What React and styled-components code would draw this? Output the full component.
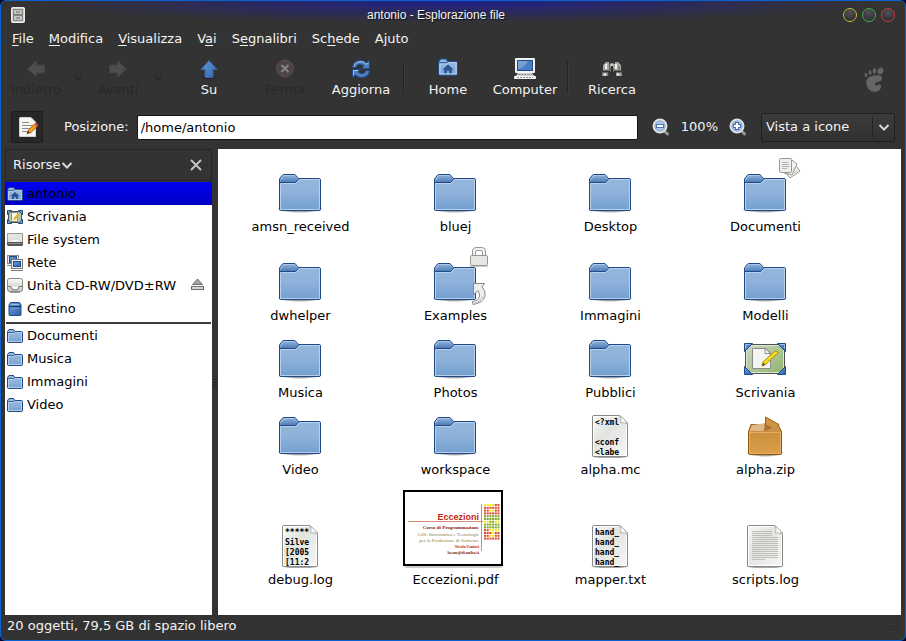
import React, {useState} from 'react'
import styled, {createGlobalStyle} from 'styled-components'

const menus = [
    {before:"", key:"F", after:"ile"},
    {before:"", key:"M", after:"odifica"},
    {before:"", key:"V", after:"isualizza"},
    {before:"V", key:"a", after:"i"},
    {before:"S", key:"e", after:"gnalibri"},
    {before:"Sc", key:"h", after:"ede"},
    {before:"A", key:"j", after:"uto"},
]

const places = [
    {title:"antonio", icon:"home"},
    {title:"Scrivania", icon:"desk"},
    {title:"File system", icon:"drive"},
    {title:"Rete", icon:"network"},
    {title:"Unità CD-RW/DVD±RW", icon:"cd", eject:true},
    {title:"Cestino", icon:"trash"},
]

const bookmarks = [
    {title:"Documenti", icon:"folder"},
    {title:"Musica", icon:"folder"},
    {title:"Immagini", icon:"folder"},
    {title:"Video", icon:"folder"},
]

const files = [
    {title:"amsn_received"},
    {title:"bluej"},
    {title:"Desktop"},
    {title:"Documenti", emblem:"docs"},
    {title:"dwhelper"},
    {title:"Examples", emblem:"lock"},
    {title:"Immagini"},
    {title:"Modelli"},
    {title:"Musica"},
    {title:"Photos"},
    {title:"Pubblici"},
    {title:"Scrivania", type:"desk"},
    {title:"Video"},
    {title:"workspace"},
    {title:"alpha.mc", type:"text", lines:["<?xml", "", "<conf", "<labe"]},
    {title:"alpha.zip", type:"zip"},
    {title:"debug.log", type:"text", lines:["*****", "Silve", "[2005", "[11:2"]},
    {title:"Eccezioni.pdf", type:"pdf"},
    {title:"mapper.txt", type:"text", lines:["hand_", "hand_", "hand_", "hand_"]},
    {title:"scripts.log", type:"log"},
]

// rows of the little dot matrix on the pdf cover
const dots = [
    "yyyyrr", "rrrrrr", "rryyrr", "rrrrrr", "gggggg", "gggggg",
    "yyggyy", "gggggg", "gggggg", "rryyyy", "rrryrr", "rryyrr", "rrrrrr",
]
const dotColors = {y:"#f5ee1c", r:"#dc4a2c", g:"#80a62a"}

function Gradients() {
    return (
        <Hidden width="0" height="0" aria-hidden="true">
            <defs>
                <linearGradient id="folder" x1="0" y1="0" x2="0" y2="1">
                    <stop offset="0" stopColor="#96b8de"/>
                    <stop offset="0.5" stopColor="#8fb2da"/>
                    <stop offset="1" stopColor="#729fcf"/>
                </linearGradient>
                <linearGradient id="tab" x1="0" y1="0" x2="0" y2="1">
                    <stop offset="0" stopColor="#8db0da"/>
                    <stop offset="1" stopColor="#4a7ab4"/>
                </linearGradient>
                <linearGradient id="paper" x1="0" y1="0" x2="1" y2="1">
                    <stop offset="0" stopColor="#fbfbfa"/>
                    <stop offset="0.4" stopColor="#e2e4e0"/>
                    <stop offset="1" stopColor="#f6f7f5"/>
                </linearGradient>
                <linearGradient id="box" x1="0" y1="0" x2="0" y2="1">
                    <stop offset="0" stopColor="#c68a36"/>
                    <stop offset="1" stopColor="#dca04c"/>
                </linearGradient>
                <linearGradient id="board" x1="0" y1="0" x2="1" y2="1">
                    <stop offset="0" stopColor="#d0d8c8"/>
                    <stop offset="1" stopColor="#8db46a"/>
                </linearGradient>
                <linearGradient id="blue" x1="0" y1="0" x2="1" y2="1">
                    <stop offset="0" stopColor="#6b9ad4"/>
                    <stop offset="1" stopColor="#2f65ad"/>
                </linearGradient>
                <linearGradient id="metal" x1="0" y1="0" x2="0" y2="1">
                    <stop offset="0" stopColor="#fafafa"/>
                    <stop offset="1" stopColor="#c4c6c2"/>
                </linearGradient>
                <radialGradient id="shade">
                    <stop offset="0.7" stopColor="#000" stopOpacity="0.35"/>
                    <stop offset="1" stopColor="#000" stopOpacity="0"/>
                </radialGradient>
            </defs>
        </Hidden>
    )
}

function FolderIcon() {
    return (
        <svg width="48" height="48" viewBox="0 0 48 48">
            <ellipse cx="24" cy="42" rx="23" ry="4" fill="url(#shade)"/>
            <path d="M4.500 43.500 Q3.500 43.500 3.500 42 V12 L6.500 8 Q7 7.500 8 7.500 H19 L22.500 11.500 H43 Q44.500 11.500 44.500 13 V42 Q44.500 43.500 43 43.500 Z" fill="url(#folder)" stroke="#204a87"/>
            <path d="M4.500 42.500 V16.500 H20 L24 12.500 H43.500 V42.500 Z" fill="none" stroke="#b8d0ec"/>
            <path d="M4.500 15.500 V12 L7 8.500 H18.500 L22 12 L19.500 15.500 Z" fill="url(#tab)"/>
            <path d="M5 12.500 L7.500 8.500 H18.500" fill="none" stroke="#aac6e6"/>
            <path d="M3.500 15.500 H19.500 L23 11.500" fill="none" stroke="#204a87"/>
        </svg>
    )
}

function DeskIcon() {
    return (
        <svg width="48" height="48" viewBox="0 0 48 48">
            <rect x="4.500" y="11.500" width="39" height="29" fill="url(#board)" stroke="#4d5250"/>
            <rect x="5.500" y="12.500" width="37" height="27" fill="none" stroke="#dce8d0"/>
            <path d="M12.500 15.500 H25 L29.500 20 V35.500 H11.500 V15.500 Z" fill="#f4f5f3" stroke="#8a8c88"/>
            <path d="M24 15.500 V20.500 H29.500 Z" fill="#fff" stroke="#8a8c88"/>
            <path d="M21 33 L22 29 L34 18 Q36.500 17 37 20 L25 31 Z" fill="#f4dc20" stroke="#a88f08"/>
            <path d="M21 33 L22 29.500 L24.500 32 Z" fill="#6a5220"/>
            <g fill="url(#blue)" stroke="#204a87">
                <path d="M3.500 10.500 H11.500 L3.500 18.500 Z"/>
                <path d="M44.500 10.500 H36.500 L44.500 18.500 Z"/>
                <path d="M3.500 41.500 H11.500 L3.500 33.500 Z"/>
                <path d="M44.500 41.500 H36.500 L44.500 33.500 Z"/>
            </g>
            <g fill="none" stroke="#9bbde6">
                <path d="M4.500 15.500 V11.500 H9"/>
                <path d="M39 11.500 H43.500 V15.500"/>
            </g>
        </svg>
    )
}

function PaperIcon({lines}) {
    return (
        <svg width="48" height="48" viewBox="0 0 48 48">
            <ellipse cx="24" cy="46" rx="20" ry="3" fill="url(#shade)"/>
            <path d="M8 5.500 H34 L41.500 13 V45 Q41.500 46.500 40 46.500 H8 Q6.500 46.500 6.500 45 V7 Q6.500 5.500 8 5.500 Z" fill="url(#paper)" stroke="#888a85"/>
            <path d="M7.500 45.500 V6.500 H33 M40.500 15 V45.500 H8" fill="none" stroke="#fff"/>
            <path d="M33 5.500 Q36 8 34.500 13 Q39 12 41.500 14.500 Q39 8 33 5.500 Z" fill="#fff" stroke="#b0b2ae"/>
            {lines ? lines.map((line,i)=>(
                <Preview key={i} x="9" y={15 + i * 10}>{line}</Preview>
            )) : (
                <g stroke="#bcbeba">
                    {[11, 13, 15].map((y)=> <path key={y} d={`M11 ${y}.5 H31`}/>)}
                    {[17, 19, 21, 23, 25, 27, 29, 31, 33, 35, 37].map((y)=> <path key={y} d={`M11 ${y}.5 H37`}/>)}
                    <path d="M11 39.500 H24"/>
                </g>
            )}
        </svg>
    )
}

function ZipIcon() {
    return (
        <svg width="48" height="48" viewBox="0 0 48 48">
            <ellipse cx="24" cy="43" rx="19" ry="4" fill="url(#shade)"/>
            <path d="M7.500 21.500 L10 14.500 H37 L40.500 21.500 V43 Q40.500 44.500 39 44.500 H9 Q7.500 44.500 7.500 43 Z" fill="url(#box)" stroke="#8f5902"/>
            <path d="M8.500 21 L11 15 L24 13 L23 21 Z" fill="#dfb888"/>
            <path d="M24 14 H36.500 L39.500 21 H23 Z" fill="#a87638"/>
            <path d="M24.500 7 L38 14.500 L33 19.500 L24.500 15 Z" fill="#cf9440" stroke="#9a6410"/>
            <path d="M24 21 L33 17 L37 15.500 L39.500 21 Z" fill="#c8924c"/>
            <path d="M8.500 43.500 V22.500 H39.500 V43.500 Z" fill="none" stroke="#e2b068"/>
        </svg>
    )
}

function PdfThumb() {
    return (
        <svg width="104" height="81" viewBox="0 0 104 81">
            <rect x="1" y="5" width="99" height="76" rx="3" fill="#000" opacity="0.2"/>
            <rect x="1" y="4" width="98" height="74" fill="#fff" stroke="#000" strokeWidth="2"/>
            <path d="M5 34.500 H80 M78.500 17 V64" stroke="#dc8a78"/>
            <Cover x="76" y="33" $size={9} $sans fill="#c42810">Eccezioni</Cover>
            <Cover x="76" y="42" $size={5} $bold fill="#8a1410">Corso di Programmazione</Cover>
            <Cover x="76" y="49" $size={5} fill="#8f8040">CdS: Informatica e Tecnologie</Cover>
            <Cover x="76" y="55" $size={5} fill="#8f8040">per la Produzione di Software</Cover>
            <Cover x="76" y="61" $size={4} $bold fill="#b82418">Nicola Fanizzi</Cover>
            <Cover x="76" y="67" $size={4} $bold fill="#7c2828">lacam@di.uniba.it</Cover>
            {dots.map((row,i)=> row.split("").map((dot,j)=>(
                <rect key={`${i}-${j}`} x={81 + j * 2.7} y={17 + i * 2.8} width="2" height="2" fill={dotColors[dot]}/>
            )))}
        </svg>
    )
}

function DocsEmblem() {
    return (
        <svg width="24" height="24" viewBox="0 0 24 24" stroke="#969894">
            <path d="M14 4 L22 14 L12 21 L6 14 Z" fill="#f4f5f3"/>
            <path d="M14 3 L19 7 L14 18 L6 16 Z" fill="#f4f5f3"/>
            <rect x="1.500" y="1.500" width="12" height="14" rx="1" fill="#eeeeec"/>
            <path d="M4 5.500 H10 M4 7.500 H11 M4 9.500 H11 M4 11.500 H9" stroke="#b0b2ae"/>
            <path d="M15 13 L18 9 M16 16 L20 13" stroke="#c4c6c2"/>
        </svg>
    )
}

function LockEmblem() {
    return (
        <svg width="20" height="22" viewBox="0 0 20 22">
            <path d="M3.500 10 V5 Q3.500 1.500 7 1.500 H13 Q16.500 1.500 16.500 5 V10 H13.500 V6 Q13.500 4.500 12 4.500 H8 Q6.500 4.500 6.500 6 V10 Z" fill="#f4f4f2" stroke="#969894"/>
            <rect x="1.500" y="9.500" width="17" height="10" rx="1" fill="#e4e6e2" stroke="#969894"/>
            <path d="M1 20.500 H19" stroke="#c8cac6"/>
        </svg>
    )
}

function LinkEmblem() {
    return (
        <svg width="18" height="24" viewBox="0 0 18 24">
            <path d="M3.500 1.500 H14.500 L12 5 Q16 9 15 14 Q13 21 3 22.500 L2.500 19.500 Q9 18.500 9.500 14 Q9.500 11 8 8.500 L3.500 12.500 Z" fill="#eeeeec" stroke="#888a85"/>
            <path d="M5 21 Q11 19.500 12.500 14" fill="none" stroke="#c0c2be"/>
        </svg>
    )
}

function SmallFolder({house, size = 16}) {
    return (
        <svg width={size} height={size} viewBox="0 0 16 16">
            <path d="M0.500 13 V3.500 L2 1.500 H6.500 L8 3.500 H14.500 Q15.500 3.500 15.500 4.500 V13.500 Q15.500 14.500 14.500 14.500 H1.500 Q0.500 14.500 0.500 13 Z" fill="url(#folder)" stroke="#204a87"/>
            <path d="M1.500 13.500 V5.500 H7 L8.500 4.500 H14.500 V13.500 Z" fill="none" stroke="#b4cdea"/>
            <path d="M1 4.500 H7 L8 3.500" fill="none" stroke="#3a6aa8"/>
            {house && <path d="M8 6 L12.500 10 H11 V13 H9 V11 H7 V13 H5 V10 H3.500 Z" fill="#2b5592"/>}
        </svg>
    )
}

function PlaceIcon({icon}) {
    if (icon === "home") return <SmallFolder house/>
    if (icon === "folder") return <SmallFolder/>
    if (icon === "desk") {
        return (
            <svg width="16" height="16" viewBox="0 0 16 16">
                <rect x="1.500" y="2.500" width="13" height="11" fill="#b4c8a0" stroke="#4d5250"/>
                <rect x="4.500" y="3.500" width="6" height="9" fill="#f6f6f4" stroke="#8a8c88"/>
                <path d="M7 10.500 L11.500 5" stroke="#e8b020" strokeWidth="2"/>
                <g fill="#7ba4da" stroke="#204a87">
                    <path d="M0.500 1.500 H4.500 L0.500 5.500 Z"/>
                    <path d="M15.500 1.500 H11.500 L15.500 5.500 Z"/>
                    <path d="M0.500 14.500 H4.500 L0.500 10.500 Z"/>
                    <path d="M15.500 14.500 H11.500 L15.500 10.500 Z"/>
                </g>
            </svg>
        )
    }
    if (icon === "drive") {
        return (
            <svg width="16" height="16" viewBox="0 0 16 16">
                <path d="M0.500 1.500 H15.500 V11 H0.500 Z" fill="#e4e5e2" stroke="#999b97"/>
                <path d="M2 9.500 Q8 4 14 9.500" fill="#f8f8f8" stroke="#d0d2ce"/>
                <path d="M0 10 H16 V13 L15 14 H1 L0 13 Z" fill="#555753"/>
                <path d="M1 11.500 H15" stroke="#8a8c88"/>
            </svg>
        )
    }
    if (icon === "network") {
        return (
            <svg width="16" height="16" viewBox="0 0 16 16">
                <rect x="0.500" y="0.500" width="11" height="8" fill="#eee" stroke="#888a85"/>
                <rect x="2.500" y="1.500" width="7" height="6" fill="url(#blue)" stroke="#204a87"/>
                <path d="M0 10.500 H6" stroke="#888a85"/>
                <rect x="4.500" y="4.500" width="11" height="9" fill="#eee" stroke="#777975"/>
                <rect x="6.500" y="6.500" width="7" height="5" fill="url(#blue)" stroke="#204a87"/>
                <path d="M4 15.500 H16" stroke="#777975"/>
            </svg>
        )
    }
    if (icon === "cd") {
        return (
            <svg width="16" height="16" viewBox="0 0 16 16">
                <rect x="0.500" y="0.500" width="15" height="13" rx="2" fill="url(#metal)" stroke="#888a85"/>
                <path d="M1 8.500 H4 Q4 12 8 12 Q12 12 12 8.500 H15" fill="#fafafa" stroke="#777975"/>
                <path d="M3 14.500 H13" stroke="#9a9c98"/>
            </svg>
        )
    }
    return (
        <svg width="16" height="16" viewBox="0 0 16 16">
            <path d="M3.500 1.500 H12.500 L14 4 V13.500 Q14 14.500 13 14.500 H3 Q2 14.500 2 13.500 V4 Z" fill="url(#blue)" stroke="#204a87"/>
            <path d="M2 5.500 H14" stroke="#183a6c"/>
            <path d="M4 3.500 H12" stroke="#9bbde6"/>
            <path d="M4 7.500 H12" stroke="#6c98d0"/>
        </svg>
    )
}

function ArrowIcon({turn, lit}) {
    return (
        <svg width="24" height="24" viewBox="0 0 24 24">
            {lit && <ellipse cx="12" cy="20.500" rx="8" ry="2" fill="url(#shade)"/>}
            <path transform={`rotate(${turn} 12 12)`} d="M12 3.500 L20 12.500 H16 V20.500 H8 V12.500 H4 Z"
                fill={lit ? "url(#blue)" : "#4c4e4f"} stroke={lit ? "#3465a4" : "#404243"}/>
        </svg>
    )
}

function StopIcon() {
    return (
        <svg width="24" height="24" viewBox="0 0 24 24">
            <circle cx="12" cy="11.500" r="8.500" fill="#4c4544" stroke="#5a4c4b"/>
            <path d="M8.500 8 L15.500 15 M15.500 8 L8.500 15" stroke="#858585" strokeWidth="2"/>
        </svg>
    )
}

function ReloadIcon() {
    return (
        <svg width="24" height="24" viewBox="0 0 24 24">
            <g fill="#4d80c2" stroke="#204a87">
                <path d="M3.500 10.500 Q4 3.500 12 3.500 Q15.500 3.500 17.500 6 L20.500 3.500 V11.500 H12.500 L15 9 Q9 5 7 10.500 Z"/>
                <path d="M20.500 13.500 Q20 20.500 12 20.500 Q8.500 20.500 6.500 18 L3.500 20.500 V12.500 H11.500 L9 15 Q15 19 17 13.500 Z"/>
            </g>
            <path d="M5 9.500 Q6.500 4.500 12 4.500 Q15 4.500 17 7.500 L19.500 5.500 M4.500 18 V13.500 H9" fill="none" stroke="#a4c3e8"/>
        </svg>
    )
}

function ComputerIcon() {
    return (
        <svg width="24" height="24" viewBox="0 0 24 24">
            <rect x="2" y="1" width="20" height="15" rx="1" fill="#f2f2f0"/>
            <rect x="4.500" y="3.500" width="15" height="10" fill="#4a7ec0" stroke="#204a87"/>
            <path d="M5 12 Q12 10 15 4 H5 Z" fill="#a4c0e4" opacity="0.5"/>
            <path d="M5 16 H19 L22 20 H2 Z" fill="#d0d2ce"/>
            <rect x="1" y="19" width="22" height="3" rx="1" fill="#f4f4f2"/>
            <path d="M5 17.500 H19 M4 20.500 H20" stroke="#8e908c" strokeDasharray="2 1"/>
        </svg>
    )
}

function BinocularsIcon() {
    return (
        <svg width="24" height="24" viewBox="0 0 24 24">
            <path d="M6 5 H9 V7 L12 6 L15 7 V5 H18 L21 8 V13 L22 19 H16 V15 H13 V9 H11 V15 H8 V19 H2 L3 13 V8 Z" fill="#a4a6a2"/>
            <path d="M3 14.500 H10 M14 14.500 H21" stroke="#30302f" strokeWidth="2"/>
            <path d="M11 11 V19 M13 11 V19" stroke="#333"/>
            <path d="M6 7 V12 M16 7 V12 M4 17.500 H6 M17 17.500 H19" stroke="#eeeeec" strokeWidth="2"/>
            <path d="M9.500 7 V13 M19 9 V13 M8 16 V19" stroke="#5c5e5a"/>
            <circle cx="12" cy="8" r="1" fill="#ddd"/>
        </svg>
    )
}

function Magnifier({plus}) {
    return (
        <svg width="18" height="18" viewBox="0 0 18 18">
            <path d="M12 12.500 L15.500 16" stroke="#969894" strokeWidth="3" strokeLinecap="round"/>
            <circle cx="8" cy="8" r="6.500" fill="#a9c5ea" stroke="#e2e3e0" strokeWidth="2"/>
            <circle cx="8" cy="8" r="5" fill="none" stroke="#8eaad0"/>
            <path d={plus ? "M4 8 H12 M8 4 V12" : "M4 8 H12"} stroke="#4a74b0" strokeWidth="4"/>
            <path d={plus ? "M5 8 H11 M8 5 V11" : "M5 8 H11"} stroke="#fff" strokeWidth="2"/>
        </svg>
    )
}

function GnomeFoot() {
    return (
        <svg width="22" height="26" viewBox="0 0 22 26" fill="#666666">
            <ellipse cx="17.500" cy="4" rx="2.800" ry="3.500" transform="rotate(20 17.500 4)"/>
            <ellipse cx="11.500" cy="4" rx="1.700" ry="2.700" transform="rotate(8 11.500 4)"/>
            <ellipse cx="7" cy="5.500" rx="1.400" ry="2.200" transform="rotate(-10 7 5.500)"/>
            <ellipse cx="3" cy="8" rx="1.300" ry="2" transform="rotate(-20 3 8)"/>
            <path d="M11 8.500 C17 7.500 20.500 9.500 18.500 13 C17 15.500 12 14.500 12 17.500 C12 19.500 15 18 16.500 17.500 C18 17.500 19 20 17 22.500 C14 26 6.500 26 4 19 C2 13 4.500 9.500 11 8.500 Z"/>
        </svg>
    )
}

function NoteIcon() {
    return (
        <svg width="24" height="24" viewBox="0 0 24 24">
            <path d="M5 2.500 H16 L20.500 7 V21.500 H5 Q4.500 21.500 4.500 21 V3 Z" fill="#f6f6f4" stroke="#d0d2ce"/>
            <path d="M7 7.500 H14 M7 10.500 H18 M7 13.500 H15 M7 16.500 H13" stroke="#8c8e8a"/>
            <path d="M12 18.500 L13.500 15 L19.500 9 L22 11.500 L16 17.500 Z" fill="#f5a020" stroke="#b85a00"/>
            <path d="M19.500 9 L22 11.500 L23.500 10 L21 7.500 Z" fill="#d44"/>
            <path d="M12 18.500 L13 16 L14.700 17.700 Z" fill="#222"/>
        </svg>
    )
}

function Chevron({size = 12, color = "#d8d8d8"}) {
    return (
        <svg width={size} height={size} viewBox="0 0 12 12">
            <path d="M1.500 4 L6 8.500 L10.500 4" fill="none" stroke={color} strokeWidth="2"/>
        </svg>
    )
}

function FileIcon({file}) {
    if (file.type === "desk") return <DeskIcon/>
    if (file.type === "zip") return <ZipIcon/>
    if (file.type === "pdf") return <PdfThumb/>
    if (file.type) return <PaperIcon lines={file.lines}/>
    return <FolderIcon/>
}

export default function App() {
    const [path,setPath] = useState("/home/antonio")
    const [current,setCurrent] = useState("antonio")
    const [zoom,setZoom] = useState(100)

    const renderPlace = (place) => (
        <PlaceItem key={place.title}>
            <PlaceButton $active={current === place.title} onClick={()=> setCurrent(place.title)}>
                <PlaceIcon icon={place.icon}/>
                {place.title}
            </PlaceButton>
            {place.eject && (
                <EjectButton aria-label="Espelli">
                    <svg width="13" height="13" viewBox="0 0 13 13">
                        <path d="M6.500 1 L11.500 6.500 H1.500 Z" fill="#a4a6a2" stroke="#6c6e6a"/>
                        <rect x="0.500" y="8.500" width="12" height="3" fill="#d4d4d2" stroke="#6c6e6a"/>
                    </svg>
                </EjectButton>
            )}
        </PlaceItem>
    )

    return (
        <Desktop>
            <GlobalStyle/>
            <Gradients/>
            <Window>
                <TitleBar>
                    <svg width="14" height="16" viewBox="0 0 14 16">
                        <rect x="0.500" y="0.500" width="13" height="15" rx="1" fill="#d4d6d2" stroke="#ecedea"/>
                        <rect x="2.500" y="2.500" width="9" height="5" fill="#c4c6c2" stroke="#80827e"/>
                        <rect x="2.500" y="8.500" width="9" height="5" fill="#c4c6c2" stroke="#80827e"/>
                        <path d="M5 5 H9 M5 11 H9" stroke="#6a6c68"/>
                    </svg>
                    <Title>antonio - Esplorazione file</Title>
                    <WindowButton $color="#c9bd3c" aria-label="Riduci a icona"/>
                    <WindowButton $color="#3fb544" aria-label="Massimizza"/>
                    <WindowButton $color="#cf3c3c" aria-label="Chiudi"/>
                </TitleBar>

                <MenuBar>
                    {menus.map((menu)=>(
                        <MenuButton key={menu.after}>{menu.before}<u>{menu.key}</u>{menu.after}</MenuButton>
                    ))}
                </MenuBar>

                <Toolbar>
                    <Tool $width={58} disabled><ArrowIcon turn={-90}/>Indietro</Tool>
                    <HistoryButton disabled aria-label="Cronologia indietro"><Chevron size={10} color="#292929"/></HistoryButton>
                    <Tool $width={54} disabled><ArrowIcon turn={90}/>Avanti</Tool>
                    <HistoryButton disabled aria-label="Cronologia avanti"><Chevron size={10} color="#292929"/></HistoryButton>
                    <Tool $width={76}><ArrowIcon turn={0} lit/>Su</Tool>
                    <Tool $width={76} disabled><StopIcon/>Ferma</Tool>
                    <Tool $width={76}><ReloadIcon/>Aggiorna</Tool>
                    <Divider/>
                    <Tool $width={78}><SmallFolder house size={20}/>Home</Tool>
                    <Tool $width={76}><ComputerIcon/>Computer</Tool>
                    <Divider/>
                    <Tool $width={78}><BinocularsIcon/>Ricerca</Tool>
                    <Throbber><GnomeFoot/></Throbber>
                </Toolbar>

                <LocationBar>
                    <EditToggle aria-label="Modifica posizione"><NoteIcon/></EditToggle>
                    <LocationLabel htmlFor="location">Posizione:</LocationLabel>
                    <LocationInput id="location" value={path} onChange={(e)=> setPath(e.target.value)}/>
                    <ZoomGroup>
                        <IconButton aria-label="Riduci" onClick={()=> setZoom(zoom - 25)}><Magnifier/></IconButton>
                        <span>{zoom}%</span>
                        <IconButton aria-label="Ingrandisci" onClick={()=> setZoom(zoom + 25)}><Magnifier plus/></IconButton>
                    </ZoomGroup>
                    <SelectWrap>
                        <ViewSelect aria-label="Tipo di vista" defaultValue="icone">
                            <option value="icone">Vista a icone</option>
                            <option value="elenco">Vista a elenco</option>
                        </ViewSelect>
                        <SelectArrow><Chevron/></SelectArrow>
                    </SelectWrap>
                </LocationBar>

                <Main>
                    <Sidebar>
                        <SideHeader>
                            <SideTitle>Risorse<Chevron/></SideTitle>
                            <IconButton aria-label="Chiudi riquadro">
                                <svg width="12" height="12" viewBox="0 0 12 12">
                                    <path d="M1 1 L11 11 M11 1 L1 11" stroke="#c4c4c0" strokeWidth="2"/>
                                </svg>
                            </IconButton>
                        </SideHeader>
                        <SideBody>
                            <PlaceList>{places.map(renderPlace)}</PlaceList>
                            <Rule/>
                            <PlaceList>{bookmarks.map(renderPlace)}</PlaceList>
                        </SideBody>
                    </Sidebar>
                    <Splitter>
                        <svg width="4" height="8" viewBox="0 0 4 8">
                            <path d="M0 1.500 H4 M0 4.500 H4 M0 7.500 H4" stroke="#222"/>
                        </svg>
                    </Splitter>
                    <FileGrid>
                        {files.map((file)=>(
                            <FileItem key={file.title}>
                                <IconBox $tall={!!file.emblem}>
                                    <FileIcon file={file}/>
                                    {file.emblem === "docs" && <TopEmblem><DocsEmblem/></TopEmblem>}
                                    {file.emblem === "lock" && (
                                        <EmblemColumn>
                                            <LockEmblem/>
                                            <LinkEmblem/>
                                        </EmblemColumn>
                                    )}
                                </IconBox>
                                {file.title}
                            </FileItem>
                        ))}
                    </FileGrid>
                </Main>

                <StatusBar>
                    20 oggetti, 79,5 GB di spazio libero
                    <svg width="12" height="12" viewBox="0 0 12 12" fill="#1e1e1e">
                        {[0, 1, 2, 3].map((row)=> [0, 1, 2, 3].filter((col)=> row + col > 2).map((col)=>(
                            <rect key={`${row}-${col}`} x={col * 3} y={row * 3} width="1" height="1"/>
                        )))}
                    </svg>
                </StatusBar>
            </Window>
        </Desktop>
    )
}

const GlobalStyle = createGlobalStyle`
    * { box-sizing: border-box; }
    body {
        margin: 0;
        background: #04042c;
        font-family: "DejaVu Sans", sans-serif;
        font-size: 13px;
        line-height: 16px;
    }
    button, input, select {
        margin: 0;
        padding: 0;
        border: none;
        background: none;
        color: inherit;
        font: inherit;
    }
    svg { display: block; flex: none; }
`

const Hidden = styled.svg`
    position: absolute;`

const Desktop = styled.div`
    min-height: 100vh;
    display: flex;`

const Window = styled.div`
    flex: 1;
    display: flex;
    flex-direction: column;
    border: 1px solid #0d62d2;
    border-radius: 6px;
    overflow: hidden;
    color: #f4f4f4;
    background: #333333;`

const TitleBar = styled.header`
    display: flex;
    align-items: center;
    gap: 5px;
    height: 27px;
    padding: 0 10px;
    background: radial-gradient(ellipse 48% 22px at 50% 0, #20208c, #333333);`

const Title = styled.h1`
    flex: 1;
    margin: 0;
    padding-left: 4px;
    text-align: center;
    font: 12px "Liberation Sans", sans-serif;
    text-shadow: 1px 1px 1px #111;`

const WindowButton = styled.button`
    width: 14px;
    height: 14px;
    border: 1px solid ${(p)=> p.$color};
    border-radius: 50%;
    background: radial-gradient(circle at 50% 30%, #55505a, #262626);`

const MenuBar = styled.nav`
    display: flex;
    gap: 15px;
    height: 21px;
    padding: 0 11px;`

const MenuButton = styled.button`
    white-space: nowrap;
u {
    text-underline-offset: 2px;
}`

const Toolbar = styled.div`
    display: flex;
    align-items: flex-start;
    height: 56px;
    padding: 8px 16px 0 6px;`

const Tool = styled.button`
    width: ${(p)=> p.$width}px;
    height: 41px;
    display: flex;
    flex-direction: column;
    align-items: center;
    justify-content: space-between;
&:disabled {
    color: #272727;
}`

const HistoryButton = styled.button`
    width: 26px;
    height: 41px;
    display: flex;
    align-items: center;
    justify-content: center;`

const Divider = styled.div`
    width: 2px;
    height: 32px;
    margin: 4px;
    border-left: 1px solid #242424;
    border-right: 1px solid #3a3a3a;`

const Throbber = styled.div`
    margin: 10px 4px 0 auto;`

const LocationBar = styled.div`
    display: flex;
    align-items: center;
    height: 44px;
    padding: 0 10px;`

const EditToggle = styled.button`
    width: 32px;
    height: 32px;
    display: flex;
    align-items: center;
    justify-content: center;
    border: 1px solid #1c1c1c;
    border-radius: 2px;
    background: #272727;`

const LocationLabel = styled.label`
    margin: 0 8px 0 21px;`

const LocationInput = styled.input`
    flex: 1;
    min-width: 0;
    height: 25px;
    padding: 0 3px;
    border: 1px solid #161616;
    border-radius: 2px;
    color: #000;
    background: #fff;`

const ZoomGroup = styled.div`
    display: flex;
    align-items: center;
    gap: 11px;
    margin: 0 14px;`

const IconButton = styled.button`
    display: flex;`

const SelectWrap = styled.div`
    position: relative;
    width: 134px;`

const ViewSelect = styled.select`
    appearance: none;
    width: 100%;
    height: 29px;
    padding: 0 4px;
    border: 1px solid #1e1e1e;
    border-radius: 2px;
    background: linear-gradient(#3c3c3c, #303030);
option {
    background: #333333;
}`

const SelectArrow = styled.span`
    position: absolute;
    top: 4px;
    right: 0;
    width: 23px;
    height: 21px;
    display: flex;
    align-items: center;
    justify-content: center;
    border-left: 1px solid #242424;
    pointer-events: none;`

const Main = styled.main`
    flex: 1;
    display: flex;
    padding: 0 4px;`

const Sidebar = styled.aside`
    width: 207px;
    display: flex;
    flex-direction: column;`

const SideHeader = styled.div`
    display: flex;
    align-items: center;
    justify-content: space-between;
    height: 32px;
    margin-bottom: 1px;
    padding: 0 9px 0 7px;
    border: 1px solid #242424;`

const SideTitle = styled.button`
    display: flex;
    align-items: center;`

const SideBody = styled.div`
    flex: 1;
    color: #000;
    background: #fff;`

const PlaceList = styled.ul`
    margin: 0;
    padding: 0;
    list-style: none;`

const PlaceItem = styled.li`
    display: flex;
    position: relative;`

const PlaceButton = styled.button`
    flex: 1;
    display: flex;
    align-items: center;
    gap: 4px;
    height: 23px;
    padding: 0 2px;
    white-space: nowrap;
    background: ${(p)=> p.$active ? "linear-gradient(#0000f4, #0000c4)" : "none"};`

const EjectButton = styled(IconButton)`
    position: absolute;
    top: 4px;
    right: 8px;`

const Rule = styled.hr`
    height: 2px;
    margin: 2px 1px 0;
    border: none;
    background: #3c3c3c;`

const Splitter = styled.div`
    width: 6px;
    display: flex;
    align-items: center;
    justify-content: center;`

const FileGrid = styled.ul`
    flex: 1;
    display: grid;
    grid-template-columns: repeat(auto-fill, 155px);
    align-content: start;
    row-gap: 9px;
    margin: 0;
    padding: 6px 5px;
    list-style: none;
    color: #000;
    background: #fff;`

const FileItem = styled.li`
    display: flex;
    flex-direction: column;
    align-items: center;
    justify-content: flex-end;
    gap: 4px;`

const IconBox = styled.div`
    position: relative;
    display: flex;
    align-items: flex-end;
    height: ${(p)=> p.$tall ? "60px" : "auto"};
    padding-right: 1px;`

const TopEmblem = styled.span`
    position: absolute;
    top: 2px;
    right: -12px;`

const EmblemColumn = styled.span`
    position: absolute;
    top: 2px;
    right: -9px;
    bottom: -2px;
    display: flex;
    flex-direction: column;
    align-items: center;
    justify-content: space-between;`

const Preview = styled.text`
    font: bold 8px "DejaVu Sans Mono", monospace;
    white-space: pre;`

const Cover = styled.text`
    font-family: ${(p)=> p.$sans ? "Liberation Sans" : "Liberation Serif"}, serif;
    font-size: ${(p)=> p.$size}px;
    font-weight: ${(p)=> p.$sans || p.$bold ? "bold" : "normal"};
    text-anchor: end;`

const StatusBar = styled.footer`
    display: flex;
    align-items: center;
    justify-content: space-between;
    height: 25px;
    padding: 0 5px 4px 6px;`
